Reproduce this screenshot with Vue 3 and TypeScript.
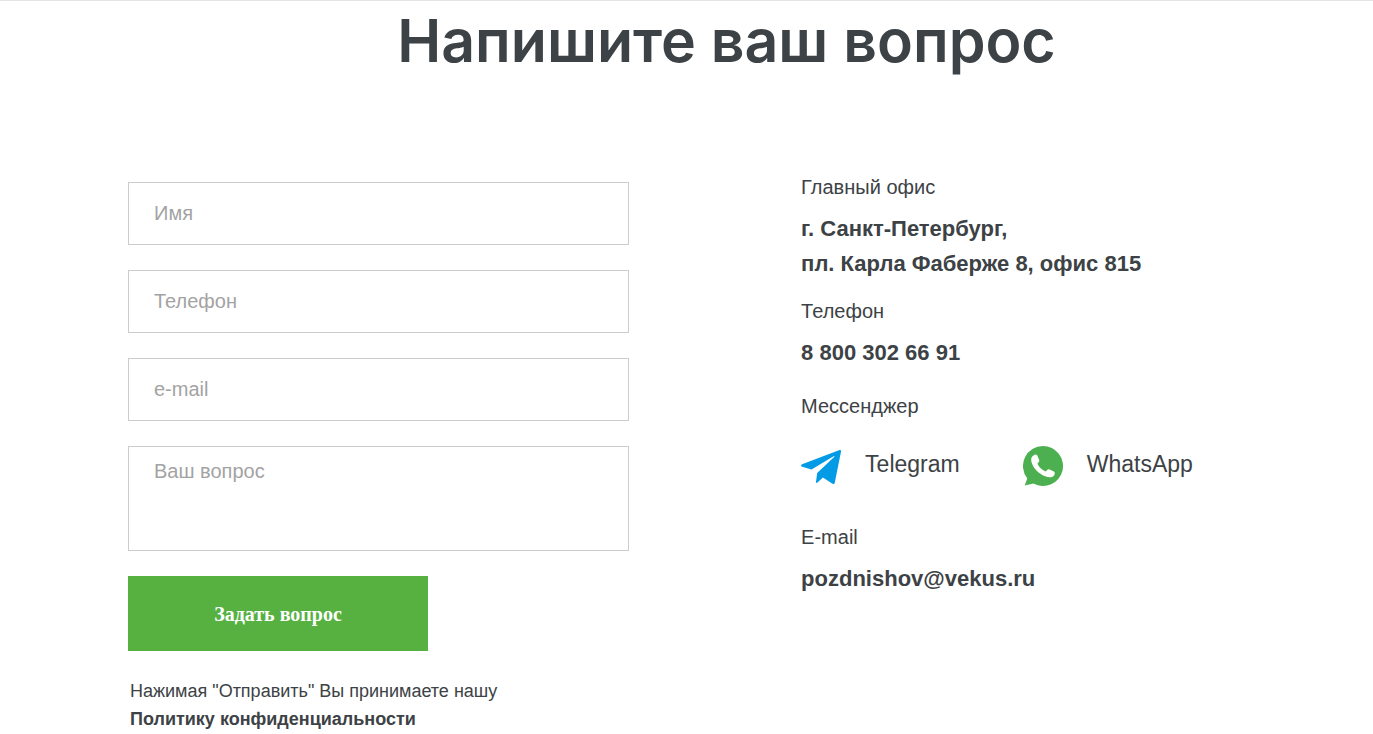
<script setup lang="ts">
import { reactive } from 'vue'

interface Field {
  id: 'name' | 'phone' | 'email'
  type: string
  label: string
}

const fields: Field[] = [
  { id: 'name', type: 'text', label: 'Имя' },
  { id: 'phone', type: 'tel', label: 'Телефон' },
  { id: 'email', type: 'email', label: 'e-mail' },
]

const form = reactive({ name: '', phone: '', email: '', question: '' })
</script>

<template>
  <main class="page">
    <h1 class="title">Напишите ваш вопрос</h1>
    <div class="columns">
      <form class="form" @submit.prevent>
        <input
          v-for="field in fields"
          :id="field.id"
          :key="field.id"
          v-model="form[field.id]"
          class="control"
          :type="field.type"
          :name="field.id"
          :placeholder="field.label"
          :aria-label="field.label"
        />
        <textarea
          id="question"
          v-model="form.question"
          class="control area"
          name="question"
          placeholder="Ваш вопрос"
          aria-label="Ваш вопрос"
        ></textarea>
        <button class="submit" type="submit">Задать вопрос</button>
        <p class="consent">
          Нажимая "Отправить" Вы принимаете нашу<br />
          <a href="#privacy">Политику конфиденциальности</a>
        </p>
      </form>

      <address class="contacts">
        <section>
          <p class="label">Главный офис</p>
          <p class="value">г. Санкт-Петербург,<br />пл. Карла Фаберже 8, офис 815</p>
        </section>
        <section class="phone">
          <p class="label">Телефон</p>
          <p class="value"><a href="tel:88003026691">8 800 302 66 91</a></p>
        </section>
        <section class="chat">
          <p class="label">Мессенджер</p>
          <div class="messengers">
            <a class="messenger" href="#telegram">
              <svg class="icon" viewBox="0 0 40 40" aria-hidden="true">
                <path
                  fill="#039be5"
                  d="M38.600 4.100 1.100 18.300c-1.500.6-1.400 1.900.1 2.400l9.300 2.900L32.200 10.400c1-.6 1.700-.1.9.6L16.200 26.900 15 35.700c-.1 1.300.6 1.700 1.500.9l5.400-5 9.200 6c1.300.8 2.400.3 2.700-1.200L40 5.800c.2-1.400-.4-2.100-1.400-1.700Z"
                />
              </svg>
              <span>Telegram</span>
            </a>
            <a class="messenger" href="#whatsapp">
              <svg class="icon" viewBox="0 0 40 40" aria-hidden="true">
                <path
                  fill="#4caf50"
                  d="M20 0a20 20 0 1 1-9.500 37.600L1.700 39.400 4.300 32.400A20 20 0 0 1 20 0Z"
                />
                <path
                  fill="#fff"
                  d="M10.700 9.200c1.100-.8 3-.9 3.600.4l1.900 4.400c.4 1-.1 1.700-1.800 3.700 2.100 4 4.600 6.300 8.500 7.700 1.500-1.900 2.200-2.500 3.200-2.100l4.800 2.200c1.200.6 1.100 2.300.3 3.700-1.500 2.500-4.900 2.600-8.500 1.300-7-2.600-11.600-7.400-13.800-13.200-1.200-3.400-.9-6.500 1.800-8.100Z"
                />
              </svg>
              <span>WhatsApp</span>
            </a>
          </div>
        </section>
        <section>
          <p class="label">E-mail</p>
          <p class="value"><a href="mailto:pozdnishov@vekus.ru">pozdnishov@vekus.ru</a></p>
        </section>
      </address>
    </div>
  </main>
</template>

<style>
body {
  margin: 0;
  background: #fff;
}
</style>

<style scoped>
.page {
  box-sizing: border-box;
  border-top: 1px solid #e4e4e4;
  padding: 0 48px 0 128px;
  color: #3c4245;
  font-family: "Liberation Sans", Arial, sans-serif;
}

.page a {
  color: inherit;
  text-decoration: none;
}

.title {
  margin: 0;
  padding-top: 4px;
  font: 600 59px/72px Inter, "Liberation Sans", sans-serif;
  text-align: center;
}

.columns {
  display: grid;
  grid-template-columns: 22fr 23fr;
  column-gap: 172px;
  margin-top: 96px;
}

.form {
  display: flex;
  flex-direction: column;
  gap: 25px;
  align-items: flex-start;
  padding-top: 9px;
}

.control {
  box-sizing: border-box;
  width: 100%;
  height: 63px;
  margin: 0;
  padding: 0 25px;
  border: 1px solid #ccc;
  border-radius: 0;
  background: #fff;
  color: inherit;
  font: 20px/24px "Liberation Sans", Arial, sans-serif;
}

.control::placeholder {
  color: #a3a3a3;
  opacity: 1;
}

.area {
  height: 105px;
  padding-top: 12px;
  resize: none;
}

.submit {
  width: 300px;
  height: 75px;
  border: 0;
  background: #56b141;
  color: #fff;
  font: bold 20px/24px "Liberation Serif", "Times New Roman", serif;
  cursor: pointer;
}

.consent {
  margin: 0;
  padding: 1px 0 0 2px;
  font-size: 18px;
  line-height: 28px;
}

.consent a {
  font-weight: bold;
}

.contacts {
  font-style: normal;
}

.contacts p {
  margin: 0;
}

.phone {
  margin-top: 16px;
}

.chat {
  margin-top: 22px;
}

.label {
  font-size: 20px;
  line-height: 28px;
}

.value {
  padding-top: 10px;
  font-size: 22px;
  font-weight: bold;
  line-height: 35px;
}

.messengers {
  display: flex;
  flex-wrap: wrap;
  gap: 24px 63px;
  margin: 26px 0 37px;
}

.messenger {
  display: flex;
  gap: 24px;
  font-size: 23px;
  line-height: 36px;
}

.icon {
  width: 40px;
  height: 40px;
}
</style>
